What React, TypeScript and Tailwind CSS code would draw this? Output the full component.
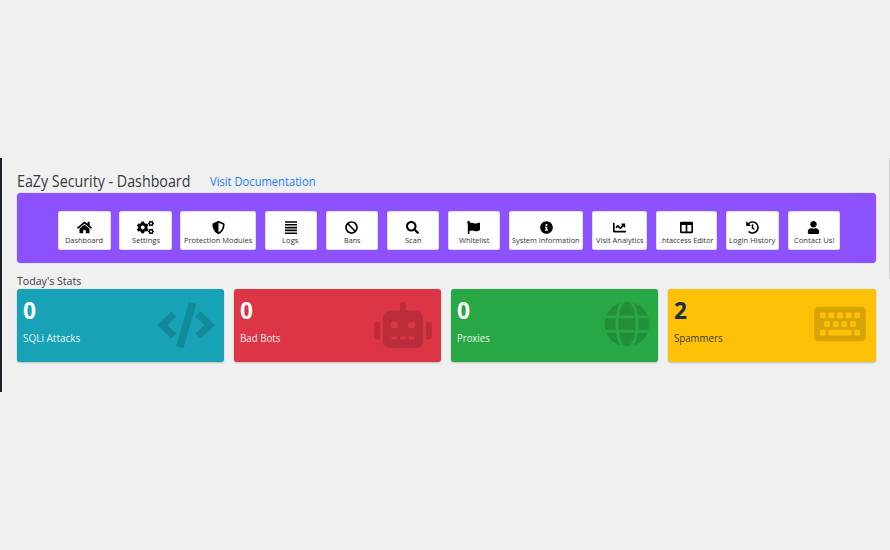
import type { ReactNode } from "react";
import {
  FaHome, FaCogs, FaShieldAlt, FaBan, FaSearch, FaFlag, FaInfoCircle, FaChartLine,
  FaColumns, FaHistory, FaUser, FaRobot, FaGlobe, FaKeyboard,
} from "react-icons/fa";

const LinesIcon = () => (
  <svg width="12" height="13" viewBox="0 0 12 13" fill="currentColor">
    <path d="M0 .2h12v1.6H0zM0 3h12v1.6H0zM0 5.8h12v1.6H0zM0 8.6h12v1.6H0zM0 11.4h12V13H0z" />
  </svg>
);

const CodeIcon = () => (
  <svg width="58" height="46" viewBox="0 0 58 46" fill="currentColor">
    <path d="M14.5 9.5 19.5 14.5 10.5 23 19.5 31.5 14.5 36.5 0 23zM43.5 9.5 38.5 14.5 47.5 23 38.5 31.5 43.5 36.5 58 23zM32 0 39.2 2 26.5 46 19 44z" />
  </svg>
);

/** A single line of condensed text fitted to the width given by its class. */
const Fit = ({ children, className }: { children: string; className: string }) => (
  <svg className={`block h-[1em] shrink-0 overflow-visible fill-current ${className}`}>
    <text x="0" y="0.9em" textLength="100%" lengthAdjust="spacingAndGlyphs">{children}</text>
  </svg>
);

type Item = { label: string; icon: ReactNode; width: string; text: string };

const items: Item[] = [
  { label: "Dashboard", icon: <FaHome size={15} />, width: "w-[52.4px]", text: "w-[38px]" },
  { label: "Settings", icon: <FaCogs size={17} />, width: "w-[52.4px]", text: "w-[28px]" },
  { label: "Protection Modules", icon: <FaShieldAlt size={13} />, width: "w-[75.4px]", text: "w-[68.4px]" },
  { label: "Logs", icon: <LinesIcon />, width: "w-[52.4px]", text: "w-[16.5px]" },
  { label: "Bans", icon: <FaBan size={13} />, width: "w-[52.4px]", text: "w-[16.5px]" },
  { label: "Scan", icon: <FaSearch size={13} />, width: "w-[52.4px]", text: "w-[16.5px]" },
  { label: "Whitelist", icon: <FaFlag size={13} />, width: "w-[52.4px]", text: "w-[30.4px]" },
  { label: "System Information", icon: <FaInfoCircle size={13} />, width: "w-[74.6px]", text: "w-[67.6px]" },
  { label: "Visit Analytics", icon: <FaChartLine size={13} />, width: "w-[54.9px]", text: "w-[47.6px]" },
  { label: ".htaccess Editor", icon: <FaColumns size={13} />, width: "w-[61.2px]", text: "w-[53.6px]" },
  { label: "Login History", icon: <FaHistory size={13} />, width: "w-[53.3px]", text: "w-[46.4px]" },
  { label: "Contact Us!", icon: <FaUser size={13} />, width: "w-[52.4px]", text: "w-[40.4px]" },
];

const stats = [
  { value: "0", label: "SQLi Attacks", color: "bg-[#17a2b8] text-white", text: "w-[57.3px]", icon: <CodeIcon />, pad: "right-[9px] top-[12.5px]" },
  { value: "0", label: "Bad Bots", color: "bg-[#dc3545] text-white", text: "w-[40.5px]", icon: <FaRobot className="h-[46px] w-[58px]" />, pad: "right-[9px] top-[12.5px]" },
  { value: "0", label: "Proxies", color: "bg-[#28a745] text-white", text: "w-[32.7px]", icon: <FaGlobe size={46} />, pad: "right-[8.7px] top-[12.3px]" },
  { value: "2", label: "Spammers", color: "bg-[#ffc107] text-[#1f2d3d]", text: "w-[48.5px]", icon: <FaKeyboard className="h-[46px] w-[52px]" />, pad: "right-[9.5px] top-[12.3px]" },
];

export default function App() {
  return (
    <div className="h-[550px] w-[890px] overflow-hidden bg-[#f0f0f0] pt-[158px] font-['Open_Sans','Noto_Sans',sans-serif] text-[#343a40]">
      <main className="flex h-[234px] border-l-2 border-[#1b2127] pl-[14.5px]">
        <div className="w-[859px] pt-[12px]">
          <header className="flex h-[22.5px] whitespace-nowrap">
            <h1 className="w-[193.2px] pt-[2.6px] text-[15.5px] leading-none"><Fit className="w-[173.4px]">EaZy Security - Dashboard</Fit></h1>
            <a className="pt-[4.8px] text-[11.7px] leading-none text-[#1d80f5]"><Fit className="w-[105.5px]">Visit Documentation</Fit></a>
          </header>
          <nav className="flex h-[70.5px] gap-[8.7px] rounded-[4px] bg-[#8c52ff] pl-[41.8px] pt-[18px] shadow-[0_0_1px_#8c52ff]">
            {items.map((it) => (
              <button key={it.label} className={`flex h-[39.2px] shrink-0 flex-col items-center rounded-[2px] border border-[#e4dcf2] bg-white pt-[9px] text-black ${it.width}`}>
                <span className="flex h-[14px] items-center justify-center">{it.icon}</span>
                <span className="pt-[1.4px] text-[7.7px] leading-none text-[#333]"><Fit className={it.text}>{it.label}</Fit></span>
              </button>
            ))}
          </nav>
          <h2 className="mt-[10px] h-[16px] pt-[2px] text-[11.3px] leading-none"><Fit className="w-[64.3px]">Today's Stats</Fit></h2>
          <section className="grid grid-cols-4 gap-[9.7px]">
            {stats.map((s) => (
              <article key={s.label} className={`relative h-[73px] rounded-[3px] pl-[6.3px] pt-[9.7px] shadow-[0_0_1px_rgba(0,0,0,.13),0_1px_2px_rgba(0,0,0,.2)] ${s.color}`}>
                <strong className="block text-[22.5px] leading-none"><Fit className="w-[13px]">{s.value}</Fit></strong>
                <p className="mt-[11.2px] text-[10.8px] leading-none opacity-90"><Fit className={s.text}>{s.label}</Fit></p>
                <span className={`absolute text-black/15 ${s.pad}`}>{s.icon}</span>
              </article>
            ))}
          </section>
        </div>
        <div className="ml-auto h-[121px] w-px bg-[#d2d2d2]" />
      </main>
    </div>
  );
}
